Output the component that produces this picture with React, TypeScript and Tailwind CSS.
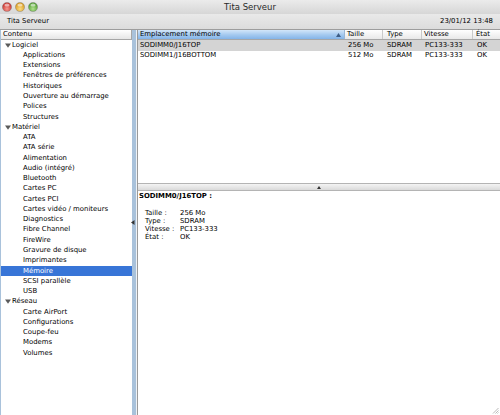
/**
 * Tita Serveur — Informations système
 * Sidebar tree + memory table + detail pane.
 */

const tree = [
  {
    label: 'Logiciel',
    children: [
      'Applications',
      'Extensions',
      'Fenêtres de préférences',
      'Historiques',
      'Ouverture au démarrage',
      'Polices',
      'Structures',
    ],
  },
  {
    label: 'Matériel',
    children: [
      'ATA',
      'ATA série',
      'Alimentation',
      'Audio (intégré)',
      'Bluetooth',
      'Cartes PC',
      'Cartes PCI',
      'Cartes vidéo / moniteurs',
      'Diagnostics',
      'Fibre Channel',
      'FireWire',
      'Gravure de disque',
      'Imprimantes',
      'Mémoire',
      'SCSI parallèle',
      'USB',
    ],
  },
  {
    label: 'Réseau',
    children: ['Carte AirPort', 'Configurations', 'Coupe-feu', 'Modems', 'Volumes'],
  },
];

const rows = [
  { slot: 'SODIMM0/J16TOP', size: '256 Mo', type: 'SDRAM', speed: 'PC133-333', state: 'OK' },
  { slot: 'SODIMM1/J16BOTTOM', size: '512 Mo', type: 'SDRAM', speed: 'PC133-333', state: 'OK' },
];

const details = [
  ['Taille :', '256 Mo'],
  ['Type :', 'SDRAM'],
  ['Vitesse :', 'PC133-333'],
  ['État :', 'OK'],
];

function Light({ from, to }: { from: string; to: string }) {
  return (
    <svg width="10" height="10" viewBox="0 0 10 10">
      <defs>
        <radialGradient id={`g${from.slice(1)}`} cx="50%" cy="70%" r="60%">
          <stop offset="0%" stopColor={from} />
          <stop offset="100%" stopColor={to} />
        </radialGradient>
      </defs>
      <circle cx="5" cy="5" r="4.6" fill={`url(#g${from.slice(1)})`} stroke="#7a7a7a" strokeWidth="0.4" />
      <ellipse cx="5" cy="3" rx="2.6" ry="1.5" fill="#fff" opacity="0.55" />
    </svg>
  );
}

function Disclosure() {
  return (
    <svg width="6" height="5" viewBox="0 0 6 5" className="shrink-0">
      <path d="M0 0.5 L6 0.5 L3 4.8 Z" fill="#5a5a5a" />
    </svg>
  );
}

export default function App() {
  return (
    <div className="flex h-[415px] w-[500px] flex-col overflow-hidden bg-white font-['DejaVu_Sans',Verdana,sans-serif] text-[6.9px] leading-none text-black">
      {/* Title bar */}
      <div className="relative flex h-[14px] shrink-0 items-center bg-gradient-to-b from-[#ebebeb] to-[#d6d6d6]">
        <div className="flex items-center gap-[3px] pl-[2px]">
          <Light from="#f59a8f" to="#c9302a" />
          <Light from="#fbdc84" to="#d99a1c" />
          <Light from="#b2e28f" to="#4f9d2e" />
        </div>
        <div className="absolute inset-x-0 top-0 flex h-[14px] items-center justify-center text-[8.5px] text-[#2a2a2a]">
          Tita Serveur
        </div>
      </div>

      {/* Machine strip */}
      <div className="flex h-[16px] shrink-0 items-center justify-between border-b border-[#9d9d9d] bg-gradient-to-b from-[#e9e9e9] to-[#dcdcdc] pl-[7px] pr-[7px]">
        <span>Tita Serveur</span>
        <span>23/01/12 13:48</span>
      </div>

      <div className="flex min-h-0 flex-1">
        {/* Sidebar */}
        <div className="relative flex w-[136px] shrink-0 flex-col border-l border-r-[4px] border-[#a9c2db]">
          <div className="flex h-[10px] shrink-0 items-center border-b border-r border-[#a6a6a6] bg-gradient-to-b from-white to-[#e6e6e6] pl-[2px]">
            Contenu
          </div>
          <div className="flex flex-col">
            {tree.map((group) => (
              <div key={group.label} className="flex flex-col">
                <div className="flex h-[10.27px] items-center gap-[1px] pl-[4px]">
                  <Disclosure />
                  <span>{group.label}</span>
                </div>
                {group.children.map((item) => (
                  <div
                    key={item}
                    className={
                      item === 'Mémoire'
                        ? 'flex h-[10.27px] items-center bg-[#3875d7] pl-[22px] text-white'
                        : 'flex h-[10.27px] items-center pl-[22px]'
                    }
                  >
                    {item}
                  </div>
                ))}
              </div>
            ))}
          </div>
          <svg width="4" height="5" viewBox="0 0 4 5" className="absolute right-[-3px] top-[190px]">
            <path d="M3.5 0 L3.5 5 L0 2.5 Z" fill="#333" />
          </svg>
        </div>

        {/* Splitter */}
        <div className="w-[2px] shrink-0 border-r border-[#9a9a9a] bg-[#eef2f6]" />

        {/* Right pane */}
        <div className="flex min-w-0 flex-1 flex-col">
          <div className="flex h-[10px] shrink-0 border-b border-[#a6a6a6]">
            <div className="flex w-[207px] items-center justify-between border-r border-[#9ab7d6] bg-gradient-to-b from-[#d3e6f9] via-[#a7cbf0] to-[#84b4e8] pl-[2px] pr-[3px]">
              <span>Emplacement mémoire</span>
              <svg width="5" height="4" viewBox="0 0 5 4">
                <path d="M0 4 L5 4 L2.5 0 Z" fill="#3e5d85" />
              </svg>
            </div>
            <div className="flex w-[38px] items-center border-r border-[#cacaca] bg-gradient-to-b from-white to-[#e8e8e8] pl-[2px]">Taille</div>
            <div className="flex w-[39px] items-center border-r border-[#cacaca] bg-gradient-to-b from-white to-[#e8e8e8] pl-[4px]">Type</div>
            <div className="flex w-[51px] items-center border-r border-[#cacaca] bg-gradient-to-b from-white to-[#e8e8e8] pl-[2px]">Vitesse</div>
            <div className="flex flex-1 items-center bg-gradient-to-b from-white to-[#e8e8e8] pl-[3px]">État</div>
          </div>

          <div className="flex min-h-0 flex-1 flex-col">
            {rows.map((r, i) => (
              <div key={r.slot} className={i === 0 ? 'flex h-[10.5px] items-center bg-[#d4d4d4]' : 'flex h-[10.5px] items-center'}>
                <span className="w-[207px] pl-[2px]">{r.slot}</span>
                <span className="w-[38px] pl-[3px]">{r.size}</span>
                <span className="w-[39px] pl-[4px]">{r.type}</span>
                <span className="w-[51px] pl-[3px]">{r.speed}</span>
                <span className="flex-1 pl-[4px]">{r.state}</span>
              </div>
            ))}
          </div>

          {/* Horizontal splitter */}
          <div className="flex h-[8px] shrink-0 items-center justify-center border-y border-[#b4b4b4] bg-gradient-to-b from-[#f4f4f4] to-[#dadada]">
            <svg width="4" height="3" viewBox="0 0 4 3">
              <path d="M0 3 L4 3 L2 0 Z" fill="#333" />
            </svg>
          </div>

          {/* Detail pane */}
          <div className="relative flex h-[224px] shrink-0 flex-col pl-[1px]">
            <div className="h-[8px] pt-[1px] font-bold leading-[8px]">SODIMM0/J16TOP :</div>
            <div className="mt-[10px] flex flex-col pl-[6px]">
              {details.map(([k, v]) => (
                <div key={k} className="flex h-[8px] items-center">
                  <span className="w-[35px]">{k}</span>
                  <span>{v}</span>
                </div>
              ))}
            </div>
            <svg width="7" height="7" viewBox="0 0 7 7" className="absolute bottom-[1px] right-[1px]">
              <path d="M6.5 1 L1 6.5 M6.5 3.5 L3.5 6.5 M6.5 5.5 L5.5 6.5" stroke="#8a8a8a" strokeWidth="0.6" />
            </svg>
          </div>
        </div>
      </div>
    </div>
  );
}
